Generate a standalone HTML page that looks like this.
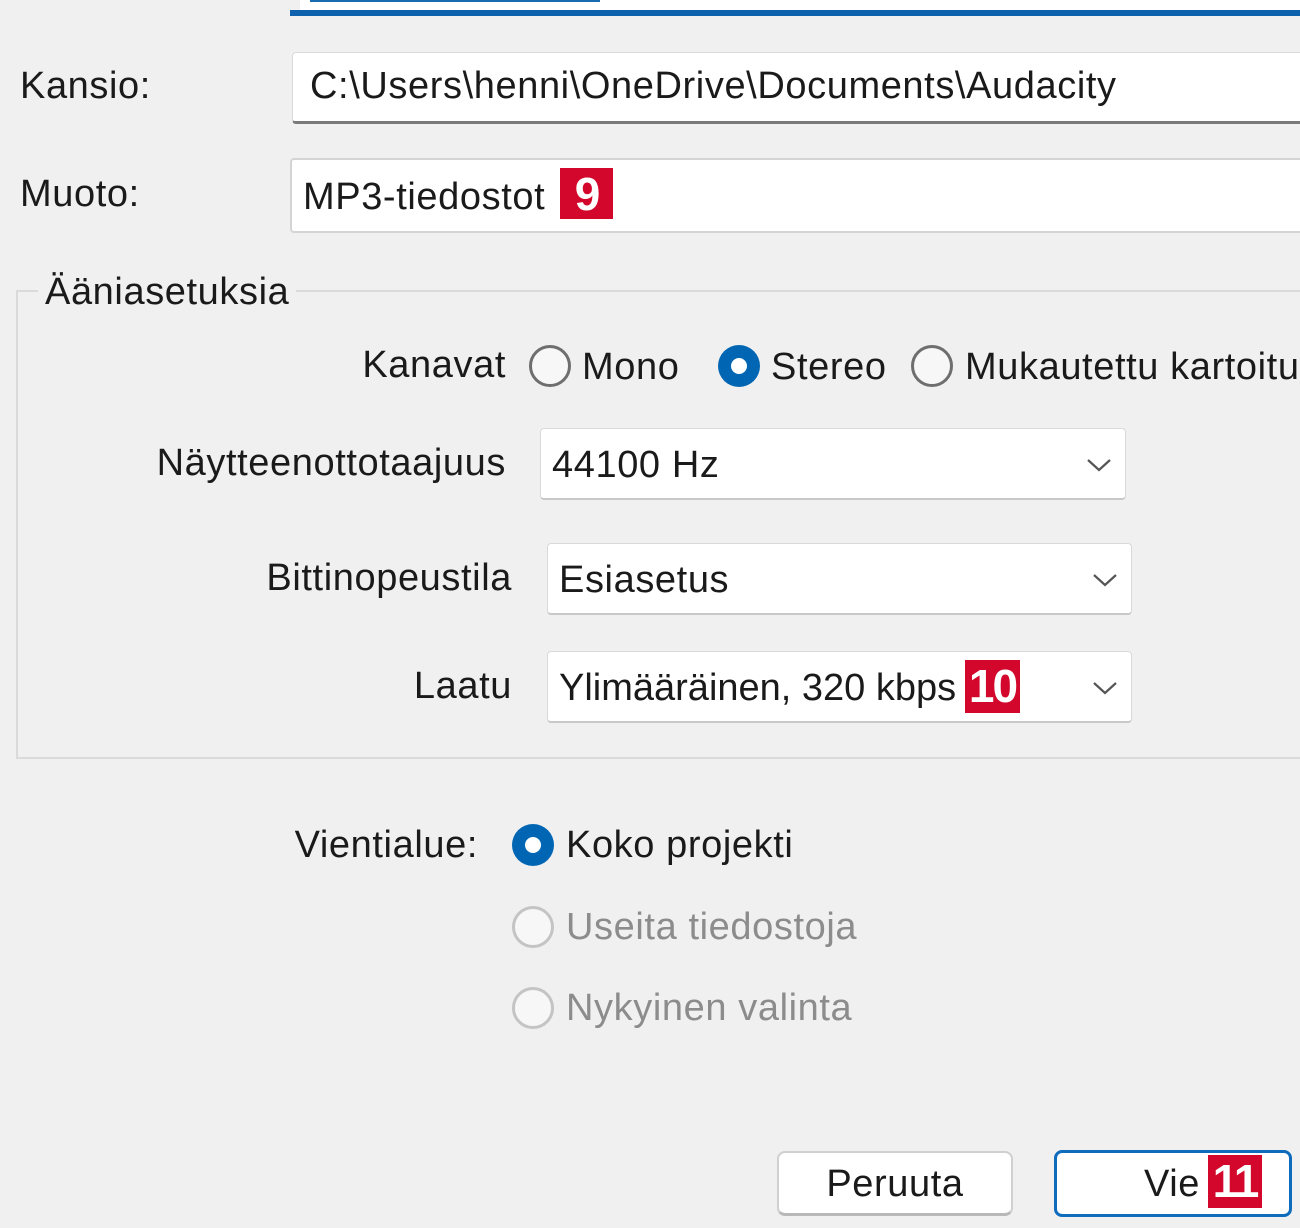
<!DOCTYPE html>
<html><head><meta charset="utf-8"><style>
*{margin:0;padding:0;box-sizing:border-box}
body{width:1300px;height:1228px;background:#f0f0f0;position:relative;overflow:hidden;font-family:"Liberation Sans",sans-serif;color:#1a1a1a}
.t{position:absolute;font-size:38px;letter-spacing:0.6px;line-height:44px;white-space:nowrap}
.r{text-align:right}
.box{position:absolute;background:#fff;border:1px solid #d9d9d9;border-radius:4px}
.rad{position:absolute;width:42px;height:42px;border-radius:50%;border:3px solid #6e6e6e;background:#f7f7f7}
.rad.on{border:none;background:#0066b4}
.rad.on::after{content:"";position:absolute;left:13px;top:13px;width:16px;height:16px;border-radius:50%;background:#fff}
.rad.dis{border-color:#c4c4c4}
.badge{position:absolute;background:#d2072b;color:#fff;font-size:46px;font-weight:bold;line-height:52px;text-align:center;letter-spacing:-2px}
.chev{position:absolute;width:28px;height:18px}
.dis-t{color:#8c8c8c}
</style></head><body>
<div style="position:absolute;left:300px;top:0;width:1000px;height:10px;background:#fff"></div>
<div style="position:absolute;left:310px;top:0;width:290px;height:2px;background:#1a6cb0"></div>
<div style="position:absolute;left:290px;top:10px;width:1010px;height:6px;background:#0e62ad"></div>

<div class="t" style="left:20px;top:64px">Kansio:</div>
<div class="box" style="left:292px;top:52px;width:1020px;height:72px;border-bottom:3px solid #7a7a7a"></div>
<div class="t" style="left:310px;top:64px">C:\Users\henni\OneDrive\Documents\Audacity</div>

<div class="t" style="left:20px;top:172px">Muoto:</div>
<div class="box" style="left:290px;top:158px;width:1020px;height:75px;border:2px solid #d4d4d4"></div>
<div class="t" style="left:303px;top:175px">MP3-tiedostot</div>
<div class="badge" style="left:560px;top:168px;width:53px;height:51px">9</div>

<div style="position:absolute;left:16px;top:290px;width:1300px;height:469px;border:2px solid #dadada"></div>
<div class="t" style="left:38px;top:270px;background:#f0f0f0;padding:0 7px">Ääniasetuksia</div>

<div class="t r" style="right:794px;top:343px">Kanavat</div>
<div class="rad" style="left:529px;top:345px"></div>
<div class="t" style="left:582px;top:345px">Mono</div>
<div class="rad on" style="left:718px;top:345px"></div>
<div class="t" style="left:771px;top:345px">Stereo</div>
<div class="rad" style="left:911px;top:345px"></div>
<div class="t" style="left:965px;top:345px">Mukautettu kartoitus</div>

<div class="t r" style="right:794px;top:441px">Näytteenottotaajuus</div>
<div class="box" style="left:540px;top:428px;width:586px;height:72px;border-bottom:2px solid #c8c8c8"></div>
<div class="t" style="left:552px;top:443px">44100 Hz</div>
<svg class="chev" style="left:1085px;top:456px" viewBox="0 0 28 18"><path d="M3 4 L14 14 L25 4" fill="none" stroke="#555" stroke-width="2.2"/></svg>

<div class="t r" style="right:788px;top:556px">Bittinopeustila</div>
<div class="box" style="left:547px;top:543px;width:585px;height:72px;border-bottom:2px solid #c8c8c8"></div>
<div class="t" style="left:559px;top:558px">Esiasetus</div>
<svg class="chev" style="left:1091px;top:571px" viewBox="0 0 28 18"><path d="M3 4 L14 14 L25 4" fill="none" stroke="#555" stroke-width="2.2"/></svg>

<div class="t r" style="right:788px;top:664px">Laatu</div>
<div class="box" style="left:547px;top:651px;width:585px;height:72px;border-bottom:2px solid #c8c8c8"></div>
<div class="t" style="left:559px;top:666px;letter-spacing:0">Ylimääräinen, 320 kbps</div>
<div class="badge" style="left:965px;top:660px;width:55px;height:53px">10</div>
<svg class="chev" style="left:1091px;top:679px" viewBox="0 0 28 18"><path d="M3 4 L14 14 L25 4" fill="none" stroke="#555" stroke-width="2.2"/></svg>

<div class="t r" style="right:822px;top:823px">Vientialue:</div>
<div class="rad on" style="left:512px;top:824px"></div>
<div class="t" style="left:566px;top:823px">Koko projekti</div>
<div class="rad dis" style="left:512px;top:906px"></div>
<div class="t dis-t" style="left:566px;top:905px">Useita tiedostoja</div>
<div class="rad dis" style="left:512px;top:987px"></div>
<div class="t dis-t" style="left:566px;top:986px">Nykyinen valinta</div>

<div class="box" style="left:777px;top:1151px;width:236px;height:65px;border:2px solid #d0d0d0;border-bottom:3px solid #b8b8b8;border-radius:8px"></div>
<div class="t" style="left:777px;top:1162px;width:236px;text-align:center">Peruuta</div>
<div class="box" style="left:1054px;top:1150px;width:238px;height:67px;border:3px solid #0f6cbd;border-radius:8px"></div>
<div class="t" style="left:1144px;top:1162px">Vie</div>
<div class="badge" style="left:1208px;top:1155px;width:54px;height:53px">11</div>
</body></html>
